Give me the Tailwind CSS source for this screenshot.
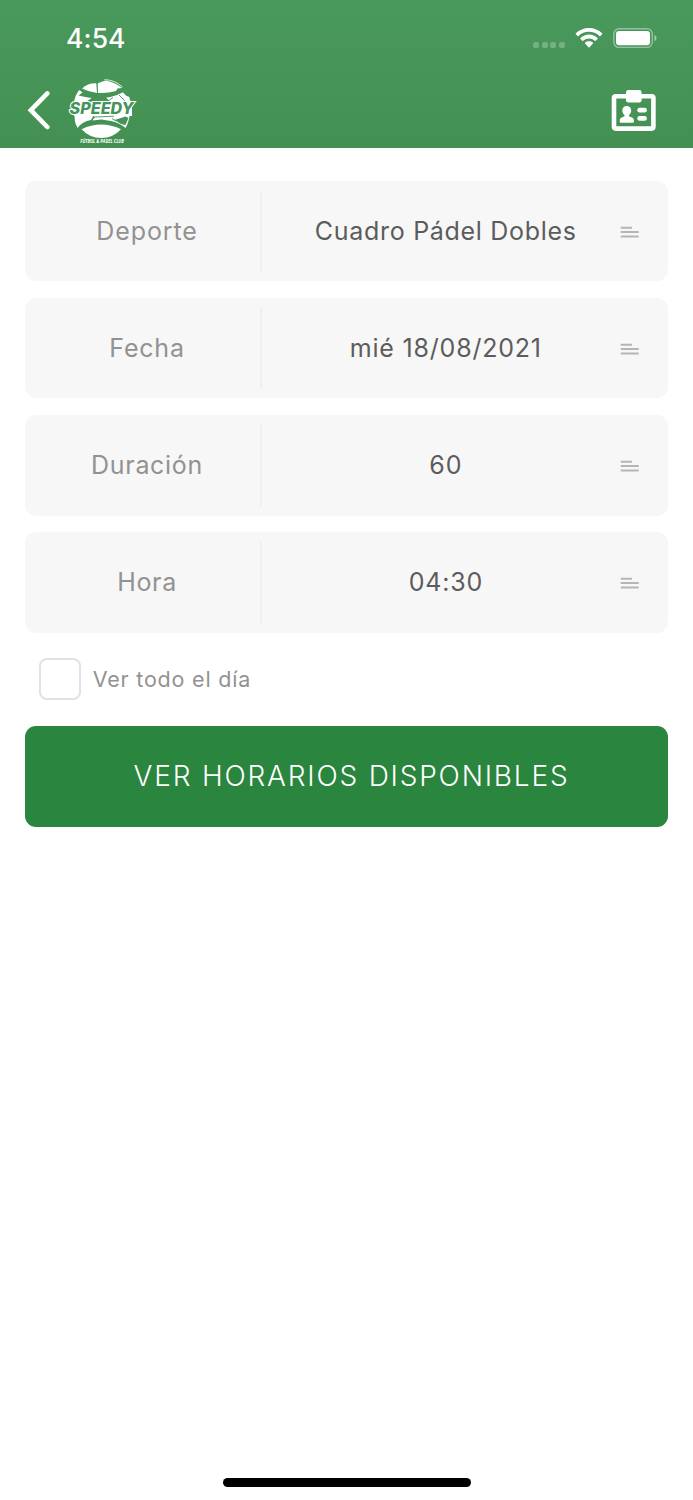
<!DOCTYPE html>
<html lang="es">
<head>
  <meta charset="UTF-8" />
  <meta name="viewport" content="width=device-width, initial-scale=1.0"/>
  <title>Reservar</title>
  <script src="https://cdn.jsdelivr.net/npm/@tailwindcss/browser@4"></script>
</head>
<body class="bg-white font-['Inter',sans-serif]">
<div class="h-[1500px] flex flex-col overflow-hidden">

  <header class="h-[147.5px] shrink-0 bg-linear-to-b from-[#4a995c] to-[#439052] text-white">
    <!-- status bar -->
    <div class="h-[75px] pl-[66px] pr-[36px] flex items-center justify-between">
      <span class="mt-[2px] text-[26.5px] leading-none font-medium tracking-[0.1px]">4:54</span>
      <div class="flex items-center">
        <div class="flex gap-[2.6px] mt-[14px] mr-[10px]">
          <span class="size-[6px] rounded-[2px] bg-white/25"></span>
          <span class="size-[6px] rounded-[2px] bg-white/25"></span>
          <span class="size-[6px] rounded-[2px] bg-white/25"></span>
          <span class="size-[6px] rounded-[2px] bg-white/25"></span>
        </div>
        <svg class="w-[28px] h-[20px] mr-[10px]" viewBox="0 0 28 20" fill="currentColor">
          <path d="M14 0C19 0 23.7 2 27.1 5.3Q27.6 5.8 27.1 6.3L25.4 8Q25 8.4 24.5 8A15.2 15.2 0 0 0 3.5 8Q3 8.4 2.6 8L.9 6.3Q.4 5.8.9 5.3C4.3 2 9 0 14 0Z"/>
          <path d="M14 6.6C17.2 6.6 20.2 7.9 22.5 10Q23 10.5 22.5 11L20.7 12.7Q20.3 13.1 19.8 12.7A8.8 8.8 0 0 0 8.2 12.7Q7.7 13.1 7.3 12.7L5.5 11Q5 10.5 5.5 10C7.8 7.9 10.8 6.6 14 6.6Z"/>
          <path d="M14 13.2C15.5 13.2 16.8 13.7 17.9 14.6Q18.4 15.1 17.9 15.6L14.5 19.2Q14 19.7 13.5 19.2L10.1 15.6Q9.6 15.1 10.1 14.6C11.2 13.7 12.5 13.2 14 13.2Z"/>
        </svg>
        <svg class="w-[44px] h-[20px]" viewBox="0 0 44 20">
          <rect x=".8" y=".7" width="38.5" height="18.8" rx="5.5" fill="none" stroke="#fff" stroke-opacity=".42" stroke-width="1.4"/>
          <rect x="3" y="3" width="34" height="14.2" rx="3.2" fill="#fff"/>
          <path d="M41.5 6.8Q43.5 7.5 43.5 10.1T41.5 13.4Z" fill="#fff" fill-opacity=".5"/>
        </svg>
      </div>
    </div>

    <!-- nav bar -->
    <div class="h-[72px] pl-[27px] pr-[36px] flex items-center">
      <svg class="w-[24px] h-[40px] -mt-[2px]" viewBox="0 0 24 40" fill="none" stroke="currentColor" stroke-width="4.6" stroke-linecap="round" stroke-linejoin="miter">
        <path d="M20.3 3.4L3.8 20.2L20.3 37"/>
      </svg>

      <svg class="w-[70px] h-[68px] ml-[17px] mt-[4px]" viewBox="0 0 70 68">
        <!-- ball -->
        <g fill="#fff">
          <path d="M14 9.5Q20 4 28.3 4.4L29 14Q21 13 14 9.5Z"/>
          <path d="M29.8 4.2L37.5 1.6Q46 2.7 54 9L49.5 9.5L48 12Q40 14.6 30 14Z"/>
          <path d="M36.5 .6Q47 1 54.5 8" fill="none" stroke="#fff" stroke-width=".8"/>
          <path d="M11.5 11L14.5 13.5L10.5 16.5Q20 18.8 24 19L18.5 23L17 26H5.5Q7 15 11.5 11Z"/>
          <path d="M38 18.8Q49 17.5 57.5 11.5Q62 17 62.8 25H42L41 21.5Z"/>
          <path d="M6 22H64V37H6Z"/>
          <path d="M7 34H27L23 41Q14 42.5 9.5 49Q5.5 42 7 34Z"/>
          <path d="M28 34H62Q61 43 57.5 49Q51 43.5 43 42L33.5 40.5L24.5 41.5Z"/>
          <path d="M13.6 50.2Q33 41 53 50.2Q45 59 33.3 59T13.6 50.2Z"/>
        </g>
        <g fill="none" stroke="#46945a" stroke-width=".9">
          <path d="M18 23L24 19L38 19L42 23Z" fill="#46945a" stroke="none"/>
          <path d="M45 18.5L40 22M51 16L57 22M24 41L27 38L46 37.2M44 39.5L48 42"/>
          <path d="M46.5 41L57.5 37.5L60.5 39L57.5 46L53 45Z" fill="#46945a" stroke="none"/>
          <path d="M54 12.5L58 11.5L62 18L58.5 17Z" fill="#46945a" stroke="none"/>
        </g>
        <text x="1.6" y="35" textLength="64" lengthAdjust="spacingAndGlyphs" font-family="Inter" font-weight="800" font-style="italic" font-size="15.4" fill="#46945a" stroke="#fff" stroke-width="2" paint-order="stroke">SPEEDY</text>
        <text x="12.3" y="63.8" textLength="43.5" lengthAdjust="spacingAndGlyphs" font-family="Open Sans" font-weight="700" font-style="italic" font-size="4.8" fill="#fff">FÚTBOL &amp; PADEL CLUB</text>
      </svg>

      <svg class="w-[46px] h-[42px] ml-auto" viewBox="0 0 46 42" fill="#fff">
        <rect x="3" y="6.2" width="39.4" height="32.4" rx="1.8" fill="none" stroke="#fff" stroke-width="4.6"/>
        <rect x="15" y="0" width="15.6" height="12.6" rx="2.4"/>
        <path d="M15.7 16C18.5 16 20.2 18 20.2 20.5C20.2 22.4 19.3 24 18 25V26.2L21.5 27.8Q23 28.8 23 31.2Q23 32.8 21.6 32.8H10Q8.6 32.8 8.6 31.2Q8.6 28.8 10.1 27.8L13.5 26.2V25C12.2 24 11.3 22.4 11.3 20.5C11.3 18 13 16 15.7 16Z"/>
        <rect x="26.3" y="17.8" width="9.6" height="4.8" rx="2.4"/>
        <rect x="26.3" y="26" width="9.6" height="4.8" rx="2.4"/>
      </svg>
    </div>
  </header>

  <main class="flex-1 pt-[33.4px] px-[25.3px]">
    <div class="flex flex-col gap-[16.9px] text-[25px] leading-none text-[#5c5c5c]">
      <div class="h-[100.3px] rounded-[11px] bg-[#f7f7f7] py-[10px] flex">
        <div class="w-[236.5px] pl-[9px] border-r-2 border-[#efefef] flex items-center justify-center text-[#929292]">
          <span class="tracking-[0.9px]">Deporte</span>
        </div>
        <div class="w-[368px] flex items-center justify-center">
          <span class="tracking-[0.7px]">Cuadro Pádel Dobles</span>
        </div>
        <svg class="w-[20px] h-[13px] mt-[35px] -ml-[10px]" viewBox="0 0 20 13" fill="#b5b5b5">
          <path d="M.7.7H12V2.7H.7ZM.7 5H18.7V7H.7ZM.7 9.5H18.7V11.5H.7Z"/>
        </svg>
      </div>

      <div class="h-[100.3px] rounded-[11px] bg-[#f7f7f7] py-[10px] flex">
        <div class="w-[236.5px] pl-[9px] border-r-2 border-[#efefef] flex items-center justify-center text-[#929292]">
          <span class="tracking-[0.8px]">Fecha</span>
        </div>
        <div class="w-[368px] flex items-center justify-center">
          <span class="tracking-[0.8px]">mié 18/08/2021</span>
        </div>
        <svg class="w-[20px] h-[13px] mt-[35px] -ml-[10px]" viewBox="0 0 20 13" fill="#b5b5b5">
          <path d="M.7.7H12V2.7H.7ZM.7 5H18.7V7H.7ZM.7 9.5H18.7V11.5H.7Z"/>
        </svg>
      </div>

      <div class="h-[100.3px] rounded-[11px] bg-[#f7f7f7] py-[10px] flex">
        <div class="w-[236.5px] pl-[9px] border-r-2 border-[#efefef] flex items-center justify-center text-[#929292]">
          <span class="tracking-[0.7px]">Duración</span>
        </div>
        <div class="w-[368px] flex items-center justify-center">
          <span class="tracking-[1px]">60</span>
        </div>
        <svg class="w-[20px] h-[13px] mt-[35px] -ml-[10px]" viewBox="0 0 20 13" fill="#b5b5b5">
          <path d="M.7.7H12V2.7H.7ZM.7 5H18.7V7H.7ZM.7 9.5H18.7V11.5H.7Z"/>
        </svg>
      </div>

      <div class="h-[100.3px] rounded-[11px] bg-[#f7f7f7] py-[10px] flex">
        <div class="w-[236.5px] pl-[9px] border-r-2 border-[#efefef] flex items-center justify-center text-[#929292]">
          <span class="tracking-[0.7px]">Hora</span>
        </div>
        <div class="w-[368px] flex items-center justify-center">
          <span class="tracking-[0.8px]">04:30</span>
        </div>
        <svg class="w-[20px] h-[13px] mt-[35px] -ml-[10px]" viewBox="0 0 20 13" fill="#b5b5b5">
          <path d="M.7.7H12V2.7H.7ZM.7 5H18.7V7H.7ZM.7 9.5H18.7V11.5H.7Z"/>
        </svg>
      </div>
    </div>

    <label class="mt-[25.5px] ml-[13.4px] flex items-center">
      <span class="size-[42px] rounded-[8px] border-2 border-[#e2e2e2]"></span>
      <span class="ml-[12px] text-[21.5px] leading-none tracking-[0.8px] text-[#929292]">Ver todo el día</span>
    </label>

    <button class="mt-[26.2px] w-full h-[100.3px] rounded-[11px] bg-[#2a853f] text-white text-[28px] font-light leading-none tracking-[1.8px] pl-[10px] pb-[2px]">VER HORARIOS DISPONIBLES</button>
  </main>

  <!-- home indicator -->
  <div class="w-[248px] h-[8.5px] mb-[13.5px] mx-auto shrink-0 rounded-full bg-black"></div>
</div>
</body>
</html>
